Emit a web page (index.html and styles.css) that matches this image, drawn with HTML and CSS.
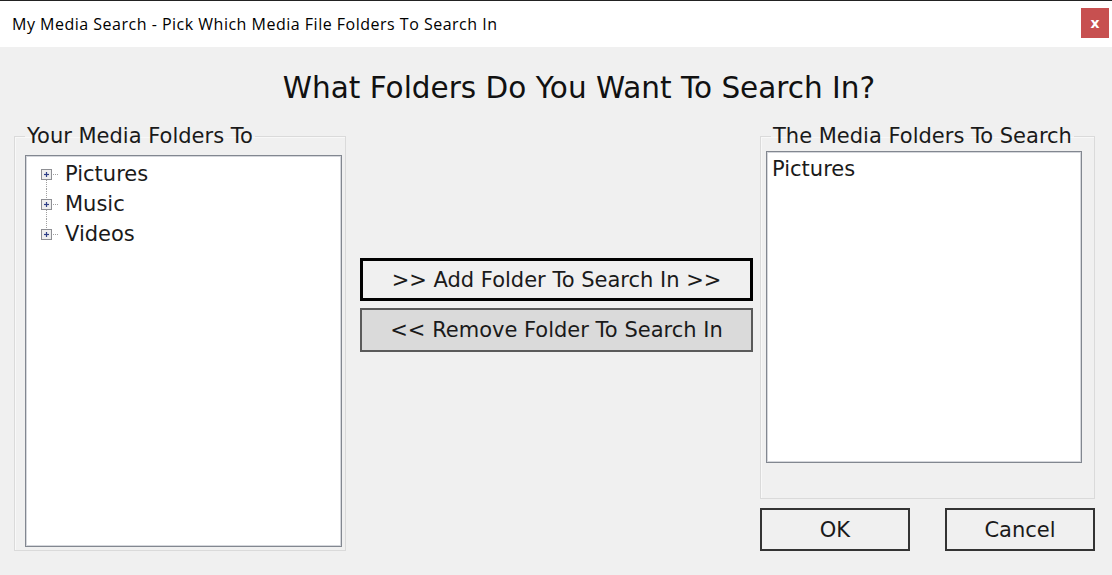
FILE: index.html
```html
<!DOCTYPE html>
<html>
<head>
<meta charset="utf-8">
<link rel="stylesheet" href="styles.css">
</head>
<body>
<div class="window">
  <div class="titlebar">
    <span class="title">My Media Search - Pick Which Media File Folders To Search In</span>
    <span class="close">x</span>
  </div>
  <div class="content">
    <h1 class="heading">What Folders Do You Want To Search In?</h1>
    <div class="row">
      <fieldset class="group left">
        <legend>Your Media Folders To</legend>
        <div class="tree">
          <div class="node">
            <svg class="twist" width="24" height="30" viewBox="0 0 24 30">
              <line x1="5.5" y1="21" x2="5.5" y2="30" class="dots"/>
              <line x1="12" y1="15.5" x2="18" y2="15.5" class="dots"/>
              <rect x="0.5" y="10.5" width="10" height="10" class="box"/>
              <line x1="3" y1="15.5" x2="8" y2="15.5" class="plus"/>
              <line x1="5.5" y1="13" x2="5.5" y2="18" class="plus"/>
            </svg>
            <span>Pictures</span>
          </div>
          <div class="node">
            <svg class="twist" width="24" height="30" viewBox="0 0 24 30">
              <line x1="5.5" y1="0" x2="5.5" y2="10" class="dots"/>
              <line x1="5.5" y1="21" x2="5.5" y2="30" class="dots"/>
              <line x1="12" y1="15.5" x2="18" y2="15.5" class="dots"/>
              <rect x="0.5" y="10.5" width="10" height="10" class="box"/>
              <line x1="3" y1="15.5" x2="8" y2="15.5" class="plus"/>
              <line x1="5.5" y1="13" x2="5.5" y2="18" class="plus"/>
            </svg>
            <span>Music</span>
          </div>
          <div class="node">
            <svg class="twist" width="24" height="30" viewBox="0 0 24 30">
              <line x1="5.5" y1="0" x2="5.5" y2="10" class="dots"/>
              <line x1="12" y1="15.5" x2="18" y2="15.5" class="dots"/>
              <rect x="0.5" y="10.5" width="10" height="10" class="box"/>
              <line x1="3" y1="15.5" x2="8" y2="15.5" class="plus"/>
              <line x1="5.5" y1="13" x2="5.5" y2="18" class="plus"/>
            </svg>
            <span>Videos</span>
          </div>
        </div>
      </fieldset>
      <div class="middle">
        <button class="btn add">&gt;&gt; Add Folder To Search In &gt;&gt;</button>
        <button class="btn remove">&lt;&lt; Remove Folder To Search In</button>
      </div>
      <div class="rightcol">
        <fieldset class="group right">
          <legend>The Media Folders To Search</legend>
          <div class="list">
            <div class="item">Pictures</div>
          </div>
        </fieldset>
        <div class="actions">
          <button class="btn plain">OK</button>
          <button class="btn plain">Cancel</button>
        </div>
      </div>
    </div>
  </div>
</div>
</body>
</html>
```

FILE: styles.css
```css
html, body {
  margin: 0;
  padding: 0;
}
body {
  width: 1112px;
  height: 575px;
  overflow: hidden;
  background: #f0f0f0;
  font-family: "DejaVu Sans", Verdana, sans-serif;
  color: #1a1a1a;
}
.window {
  display: flex;
  flex-direction: column;
  height: 575px;
}
.titlebar {
  height: 46px;
  border-top: 1px solid #222;
  background: #fff;
  display: flex;
  align-items: center;
  justify-content: space-between;
  padding-left: 12px;
  padding-right: 3px;
}
.title {
  font-family: "Open Sans", "Noto Sans", sans-serif;
  font-size: 16px;
  color: #000;
  letter-spacing: 0.5px;
  margin-top: -1px;
}
.close {
  width: 28px;
  height: 30px;
  background: #c75050;
  color: #fff;
  font-family: "DejaVu Sans", sans-serif;
  font-weight: bold;
  font-size: 14px;
  display: flex;
  align-items: center;
  justify-content: center;
  margin-top: -3px;
}
.content {
  flex: 1;
  display: flex;
  flex-direction: column;
  padding: 0 0 0 14px;
}
.heading {
  margin: 23px 0 0 0;
  text-align: center;
  font-weight: normal;
  font-size: 29.5px;
  line-height: 36px;
  color: #111;
  padding-left: 32px;
}
.row {
  display: flex;
  margin-top: 18px;
}
.group {
  margin: 0;
  padding: 0;
  border: 1px solid #dadada;
  box-shadow: inset 1px 1px 0 #f8f8f8;
  min-width: 0;
}
.group legend {
  font-size: 21px;
  line-height: 24px;
  padding: 0 2px;
  margin-left: 10px;
  color: #1a1a1a;
}
.left {
  width: 332px;
  height: 427px;
  box-sizing: border-box;
  display: flex;
  flex-direction: column;
}
.tree {
  margin: 7px 3px 0 10px;
  height: 392px;
  flex: none;
  background: #fff;
  border: 1px solid #828790;
  box-shadow: inset 0 0 0 1px #d5d7dc;
  padding-top: 3px;
  box-sizing: border-box;
}
.node {
  display: flex;
  align-items: center;
  height: 30px;
  padding-left: 15px;
  font-size: 21px;
}
.twist {
  display: block;
  flex: none;
}
.dots {
  stroke: #a0a0a0;
  stroke-width: 1;
  stroke-dasharray: 1 1;
}
.box {
  fill: #eeeeee;
  stroke: #8e8f94;
  stroke-width: 1;
}
.plus {
  stroke: #2f3f88;
  stroke-width: 1.2;
}
.middle {
  width: 393px;
  margin-left: 14px;
  display: flex;
  flex-direction: column;
  gap: 7px;
  padding-top: 134px;
}
.btn {
  font-family: "DejaVu Sans", Verdana, sans-serif;
  font-size: 21px;
  color: #1a1a1a;
  background: #f0f0f0;
  border: 1px solid #333;
  padding: 0;
  margin: 0;
  box-sizing: border-box;
}
.add {
  height: 43px;
  border: 3px solid #000;
  background: #f0f0f0;
}
.remove {
  height: 44px;
  background: #dadada;
  border: 2px solid #5a5a5a;
}
.rightcol {
  width: 335px;
  margin-left: 7px;
  display: flex;
  flex-direction: column;
}
.right {
  width: 335px;
  height: 375px;
  box-sizing: border-box;
}
.list {
  margin: 3px 12px 0 5px;
  height: 312px;
  background: #fff;
  border: 1px solid #828790;
  box-shadow: inset 0 0 0 1px #d5d7dc;
  box-sizing: border-box;
  padding: 5px 5px;
}
.item {
  font-size: 21px;
  line-height: 24px;
}
.actions {
  display: flex;
  justify-content: space-between;
  margin-top: 9px;
}
.plain {
  width: 150px;
  height: 43px;
  border: 2px solid #333;
}
```
